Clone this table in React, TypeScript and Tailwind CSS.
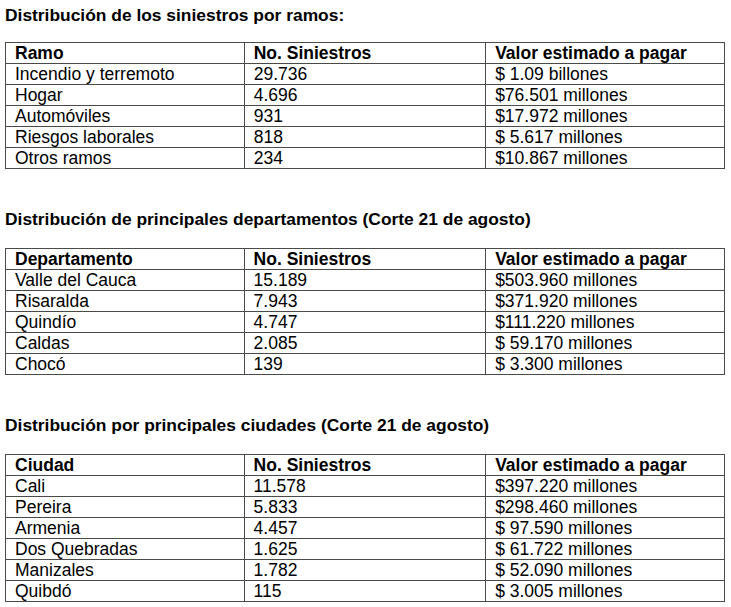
const tablas = [
  {
    titulo: "Distribución de los siniestros por ramos:",
    cabecera: "Ramo",
    filas: [
      ["Incendio y terremoto", "29.736", "$ 1.09 billones"],
      ["Hogar", "4.696", "$76.501 millones"],
      ["Automóviles", "931", "$17.972 millones"],
      ["Riesgos laborales", "818", "$ 5.617 millones"],
      ["Otros ramos", "234", "$10.867 millones"],
    ],
  },
  {
    titulo: "Distribución de principales departamentos (Corte 21 de agosto)",
    cabecera: "Departamento",
    filas: [
      ["Valle del Cauca", "15.189", "$503.960 millones"],
      ["Risaralda", "7.943", "$371.920 millones"],
      ["Quindío", "4.747", "$111.220 millones"],
      ["Caldas", "2.085", "$ 59.170 millones"],
      ["Chocó", "139", "$ 3.300 millones"],
    ],
  },
  {
    titulo: "Distribución por principales ciudades (Corte 21 de agosto)",
    cabecera: "Ciudad",
    filas: [
      ["Cali", "11.578", "$397.220 millones"],
      ["Pereira", "5.833", "$298.460 millones"],
      ["Armenia", "4.457", "$ 97.590 millones"],
      ["Dos Quebradas", "1.625", "$ 61.722 millones"],
      ["Manizales", "1.782", "$ 52.090 millones"],
      ["Quibdó", "115", "$ 3.005 millones"],
    ],
  },
];

function Tabla({ cabecera, filas }: { cabecera: string; filas: string[][] }) {
  const celda = "border border-[#4a4a4a] pl-[9px] py-0 text-left align-top whitespace-pre";
  return (
    <table className="border-collapse w-[720px] text-[17.5px] leading-[20px]">
      <colgroup>
        <col className="w-[239px]" />
        <col className="w-[242px]" />
        <col className="w-[239px]" />
      </colgroup>
      <thead>
        <tr className="font-bold">
          <th className={celda}>{cabecera}</th>
          <th className={celda}>No. Siniestros</th>
          <th className={celda}>Valor estimado a pagar</th>
        </tr>
      </thead>
      <tbody>
        {filas.map((f) => (
          <tr key={f[0]}>
            {f.map((v, i) => (
              <td key={i} className={celda}>{v}</td>
            ))}
          </tr>
        ))}
      </tbody>
    </table>
  );
}

export default function App() {
  return (
    <div className="min-h-screen bg-white text-black pt-[5px] pl-[5px] font-['Liberation_Sans',Arial,sans-serif]">
      {tablas.map((t, i) => (
        <div key={t.cabecera} className={i === 0 ? "" : "mt-[40px]"}>
          <h2 className={"font-bold text-[17.4px] leading-[20px] " + (i === 0 ? "mb-[17px]" : "mb-[19px]")}>
            {t.titulo}
          </h2>
          <Tabla cabecera={t.cabecera} filas={t.filas} />
        </div>
      ))}
    </div>
  );
}
